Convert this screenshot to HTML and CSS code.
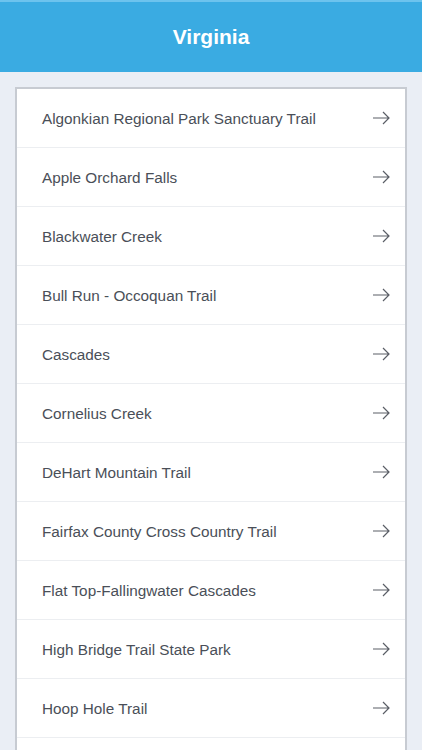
FILE: index.html
```html
<!DOCTYPE html>
<html>
<head>
<meta charset="utf-8">
<link rel="stylesheet" href="styles.css">
</head>
<body>
<header class="top"><h1 class="title">Virginia</h1></header>
<main class="content">
<ul class="list">
<li class="row"><span class="name">Algonkian Regional Park Sanctuary Trail</span><svg class="arrow" viewBox="0 0 18 14"><path d="M1 7H17M11 1L17 7L11 13" /></svg></li>
<li class="row"><span class="name">Apple Orchard Falls</span><svg class="arrow" viewBox="0 0 18 14"><path d="M1 7H17M11 1L17 7L11 13" /></svg></li>
<li class="row"><span class="name">Blackwater Creek</span><svg class="arrow" viewBox="0 0 18 14"><path d="M1 7H17M11 1L17 7L11 13" /></svg></li>
<li class="row"><span class="name">Bull Run - Occoquan Trail</span><svg class="arrow" viewBox="0 0 18 14"><path d="M1 7H17M11 1L17 7L11 13" /></svg></li>
<li class="row"><span class="name">Cascades</span><svg class="arrow" viewBox="0 0 18 14"><path d="M1 7H17M11 1L17 7L11 13" /></svg></li>
<li class="row"><span class="name">Cornelius Creek</span><svg class="arrow" viewBox="0 0 18 14"><path d="M1 7H17M11 1L17 7L11 13" /></svg></li>
<li class="row"><span class="name">DeHart Mountain Trail</span><svg class="arrow" viewBox="0 0 18 14"><path d="M1 7H17M11 1L17 7L11 13" /></svg></li>
<li class="row"><span class="name">Fairfax County Cross Country Trail</span><svg class="arrow" viewBox="0 0 18 14"><path d="M1 7H17M11 1L17 7L11 13" /></svg></li>
<li class="row"><span class="name">Flat Top-Fallingwater Cascades</span><svg class="arrow" viewBox="0 0 18 14"><path d="M1 7H17M11 1L17 7L11 13" /></svg></li>
<li class="row"><span class="name">High Bridge Trail State Park</span><svg class="arrow" viewBox="0 0 18 14"><path d="M1 7H17M11 1L17 7L11 13" /></svg></li>
<li class="row"><span class="name">Hoop Hole Trail</span><svg class="arrow" viewBox="0 0 18 14"><path d="M1 7H17M11 1L17 7L11 13" /></svg></li>
</ul>
</main>
</body>
</html>
```
FILE: styles.css
```css
html, body {
  margin: 0;
  padding: 0;
}
body {
  background: #eaeef5;
  font-family: "Liberation Sans", Arial, sans-serif;
  width: 422px;
  height: 750px;
  overflow: hidden;
}
.top {
  background: #3aabe2;
  border-top: 2px solid #6cc3ee;
  height: 70px;
  display: flex;
  align-items: center;
  justify-content: center;
}
.title {
  margin: 0;
  color: #ffffff;
  font-size: 21px;
  font-weight: bold;
  padding-bottom: 1px;
}
.content {
  padding: 15px 15px 0 15px;
}
.list {
  list-style: none;
  margin: 0;
  padding: 0 0 40px 0;
  background: #ffffff;
  border: 2px solid #c7cbd2;
  border-bottom: none;
}
.row {
  height: 56px;
  padding: 2px 15px 0 25px;
  border-bottom: 1px solid #eceef1;
  display: flex;
  align-items: center;
  justify-content: space-between;
}
.name {
  color: #4a4f58;
  font-size: 15.3px;
}
.arrow {
  width: 18px;
  height: 14px;
  margin-top: -2px;
  fill: none;
  stroke: #5a5e66;
  stroke-width: 1.2;
}
```
